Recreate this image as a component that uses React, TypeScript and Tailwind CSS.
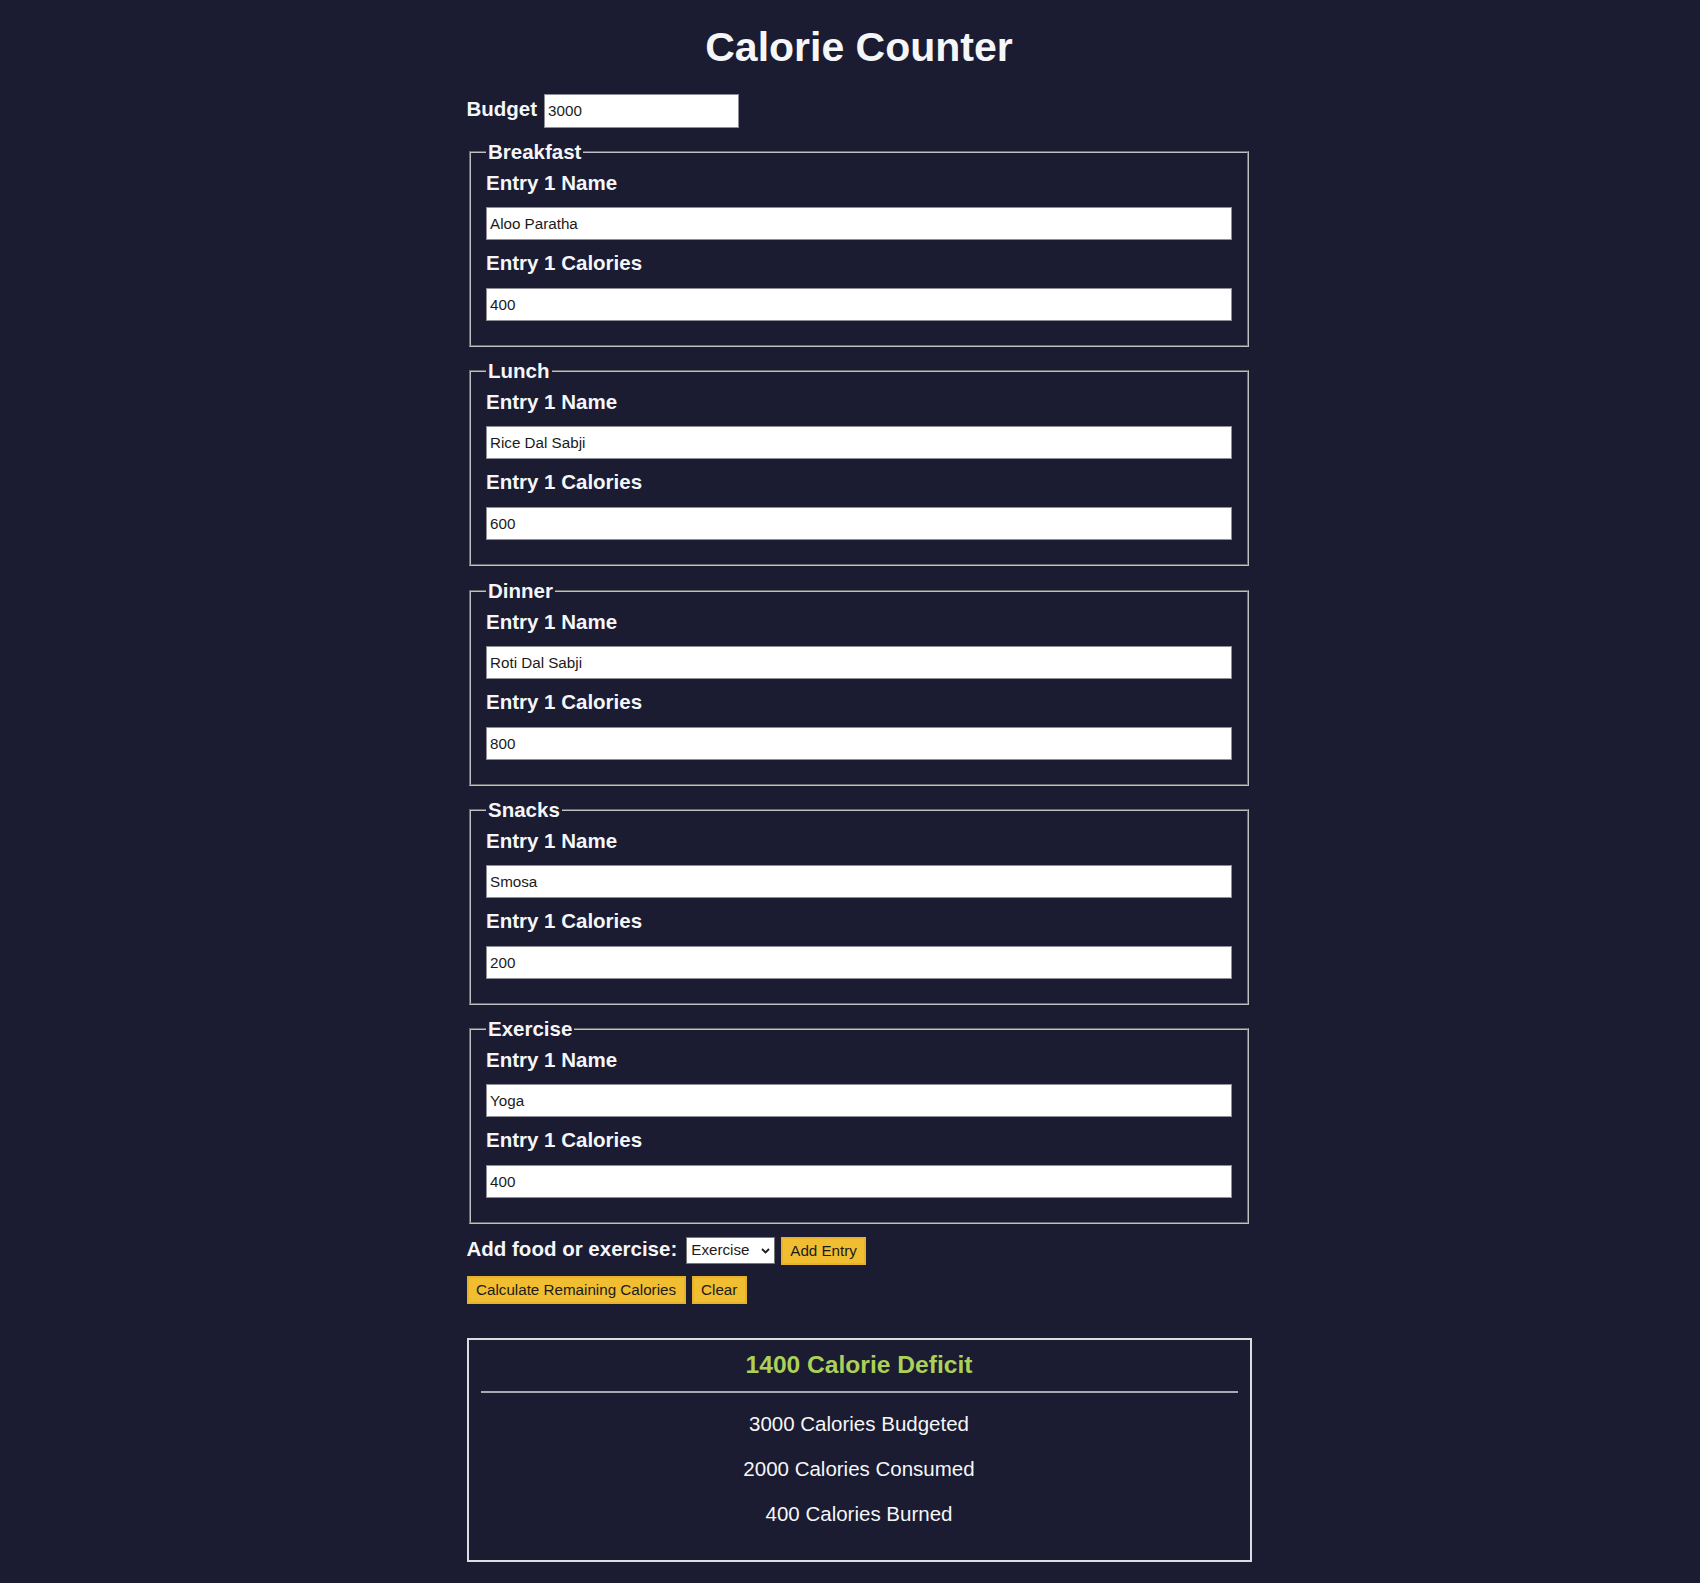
import { useState } from "react"

type Entry = { name: string; calories: string }

const sections: { id: string; title: string; entry: Entry }[] = [
  { id: "breakfast", title: "Breakfast", entry: { name: "Aloo Paratha", calories: "400" } },
  { id: "lunch", title: "Lunch", entry: { name: "Rice Dal Sabji", calories: "600" } },
  { id: "dinner", title: "Dinner", entry: { name: "Roti Dal Sabji", calories: "800" } },
  { id: "snacks", title: "Snacks", entry: { name: "Smosa", calories: "200" } },
  { id: "exercise", title: "Exercise", entry: { name: "Yoga", calories: "400" } },
]

const inputCls =
  "block w-full h-[33px] bg-white text-[#1b1b1b] text-[15.2px] pl-[3px] border border-[#8e8e96] outline-none"

const btnCls =
  "h-[28px] px-[7.5px] bg-[#f1be32] border-2 border-[#e6b22c] text-[#1b1b1b] text-[15.2px] leading-none cursor-pointer"

function Section({ id, title, entry }: { id: string; title: string; entry: Entry }) {
  return (
    <fieldset
      id={id}
      className="mx-[2.5px] mt-[12.3px] first-of-type:mt-[12px] border-2 [border-style:groove] border-[#c0c0c0] px-[15px] pt-[7px] pb-[12px]"
    >
      <legend className="px-[2px] font-bold leading-[24px]">{title}</legend>
      <div className="flex flex-col">
        <label htmlFor={`${id}-1-name`} className="font-bold leading-[24px]">
          Entry 1 Name
        </label>
        <input id={`${id}-1-name`} type="text" defaultValue={entry.name} className={`${inputCls} mt-[12px]`} />
        <label htmlFor={`${id}-1-calories`} className="font-bold leading-[24px] mt-[11px]">
          Entry 1 Calories
        </label>
        <input
          id={`${id}-1-calories`}
          type="text"
          inputMode="numeric"
          defaultValue={entry.calories}
          className={`${inputCls} mt-[13px] mb-[12px]`}
        />
      </div>
    </fieldset>
  )
}

export default function App() {
  const [kind, setKind] = useState("exercise")

  return (
    <div className="min-h-screen bg-[#1b1b32] text-[#f5f6f7] font-['Liberation_Sans',Arial,sans-serif] text-[20.5px] pt-[24px] pl-[18px] pb-[22px]">
      <div className="mx-auto w-[785px]">
        <h1 className="text-center text-[41px] leading-[47px] font-bold">Calorie Counter</h1>

        <form onSubmit={(e) => e.preventDefault()}>
          <div className="mt-[23px] flex items-baseline">
            <label htmlFor="budget" className="font-bold leading-[24px]">Budget</label>
            <input
              id="budget"
              type="text"
              inputMode="numeric"
              defaultValue="3000"
              className="ml-[7px] w-[195px] h-[34px] bg-white text-[#1b1b1b] text-[15.2px] pl-[3px] pb-[2px] border border-[#8e8e96] outline-none"
            />
          </div>

          {sections.map((s) => (
            <Section key={s.id} {...s} />
          ))}

          <div className="mt-[12.5px] flex items-start">
            <label htmlFor="entry-dropdown" className="font-bold leading-[24px]">
              Add food or exercise:
            </label>
            <div className="relative ml-[9px]">
              <select
                id="entry-dropdown"
                value={kind}
                onChange={(e) => setKind(e.target.value)}
                className="block appearance-none w-[89px] h-[27px] bg-white text-[#1b1b1b] text-[15.2px] pl-[4px] border border-[#767676] outline-none"
              >
                <option value="breakfast">Breakfast</option>
                <option value="lunch">Lunch</option>
                <option value="dinner">Dinner</option>
                <option value="snacks">Snacks</option>
                <option value="exercise">Exercise</option>
              </select>
              <svg
                className="pointer-events-none absolute right-[5px] top-[11px] w-[9px] h-[6px]"
                viewBox="0 0 9 6"
                fill="none"
                stroke="#1b1b1b"
                strokeWidth="1.8"
              >
                <path d="M1 1l3.5 3.5L8 1" />
              </svg>
            </div>
            <button type="button" className={`${btnCls} ml-[5.5px]`}>
              Add Entry
            </button>
          </div>

          <div className="mt-[11px] flex gap-[6px]">
            <button type="submit" className={btnCls}>
              Calculate Remaining Calories
            </button>
            <button type="button" className={btnCls}>
              Clear
            </button>
          </div>
        </form>

        <div className="mt-[34.3px] border-2 border-[#dcdce2] px-[12px] pt-[11px] pb-[34px] text-center">
          <div className="leading-[28px]">
            <span className="font-bold text-[24.6px] text-[#acd157]">1400 Calorie Deficit</span>
          </div>
          <hr className="mt-[11px] h-0 border-t-2 border-[#a9a9b1]" />
          <p className="mt-[19px] leading-[24px]">3000 Calories Budgeted</p>
          <p className="mt-[21px] leading-[24px]">2000 Calories Consumed</p>
          <p className="mt-[21px] leading-[24px]">400 Calories Burned</p>
        </div>
      </div>
    </div>
  )
}
